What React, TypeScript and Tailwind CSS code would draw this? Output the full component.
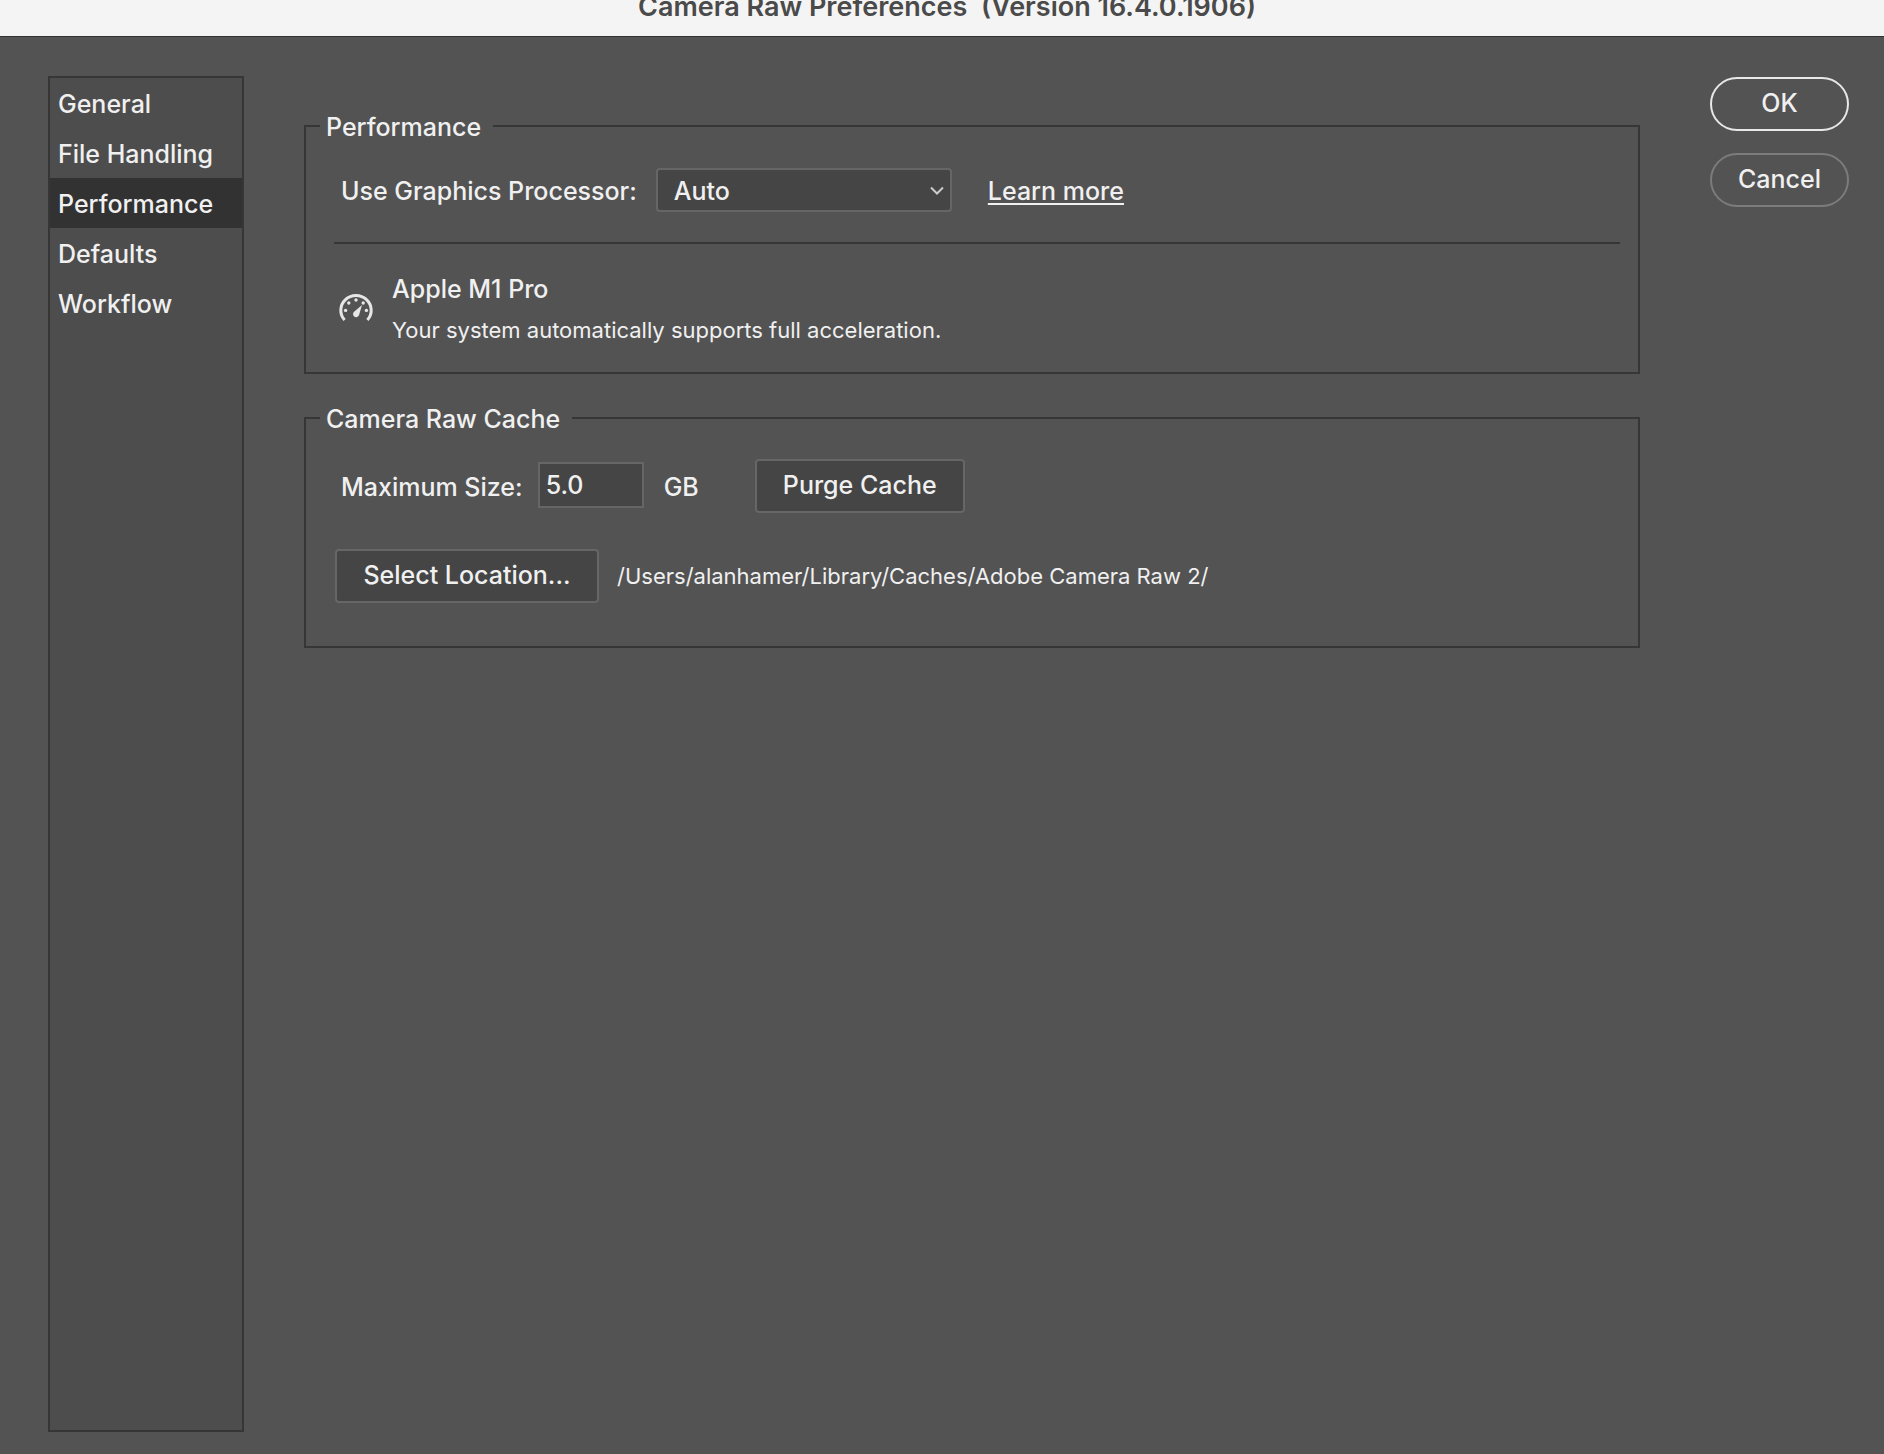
import { useState } from "react";

const sections = ["General", "File Handling", "Performance", "Defaults", "Workflow"];

function GaugeIcon() {
  return (
    <svg className="h-9 w-9 shrink-0" viewBox="0 0 36 36" fill="none" aria-hidden="true">
      <path d="M6.6 29A15.2 14.8 0 1 1 29.4 29" stroke="#e6e6e6" strokeWidth="3" />
      <g fill="#e6e6e6">
        <circle cx="7.6" cy="19.4" r="1.7" />
        <circle cx="10.8" cy="12" r="1.7" />
        <circle cx="18" cy="9" r="1.7" />
        <circle cx="25.2" cy="12" r="1.7" />
        <circle cx="28.4" cy="19.4" r="1.7" />
        <path d="M24 14L21 24.2A3.1 3.1 0 1 1 15.8 21Z" />
      </g>
    </svg>
  );
}

export default function App() {
  const [active, setActive] = useState("Performance");
  const [size, setSize] = useState("5.0");

  return (
    <div className="flex min-h-screen flex-col bg-[#535353] font-['Inter',sans-serif] text-[25px] leading-8 font-medium text-[#f0f0f0]">
      <header className="h-[37px] border-b border-[#323232] bg-[#f4f4f4] pl-[10px]">
        <h1 className="text-center text-[27px] leading-[14px] font-semibold whitespace-pre text-[#4a4a4a]">
          {"Camera Raw Preferences  (Version 16.4.0.1906)"}
        </h1>
      </header>

      <div className="flex flex-1 pt-[39px] pr-[35px] pb-[22px] pl-12">
        <nav className="w-[196px] shrink-0 border-2 border-[#363636] bg-[#4d4d4d]" aria-label="Preference sections">
          {sections.map((name) => (
            <button
              key={name}
              type="button"
              onClick={() => setActive(name)}
              aria-current={active === name ? "page" : undefined}
              className={
                active === name
                  ? "block h-[50px] w-full bg-[#323232] pt-0.5 pl-2 text-left whitespace-nowrap"
                  : "block h-[50px] w-full pt-0.5 pl-2 text-left whitespace-nowrap"
              }
            >
              {name}
            </button>
          ))}
        </nav>

        <main className="ml-[60px] min-w-0 flex-1 pt-[33px]">
          <fieldset className="min-w-0 border-2 border-[#363636] pr-[18px] pb-7 pl-[14px]">
            <legend className="pt-0.5 pr-3 pl-1.5">Performance</legend>
            <div className="pt-[25px] pl-[14px]">
              <div className="flex items-center pl-[7px]">
                <label htmlFor="gpu" className="pt-0.5">Use Graphics Processor:</label>
                <div className="relative ml-[19px] w-[296px]">
                  <select
                    id="gpu"
                    className="block h-11 w-full appearance-none rounded-sm border-2 border-[#666666] bg-[#454545] px-4 pt-0.5"
                  >
                    <option>Auto</option>
                  </select>
                  <svg
                    className="pointer-events-none absolute top-[18px] right-2 h-[10px] w-[14px]"
                    viewBox="0 0 14 10"
                    fill="none"
                    aria-hidden="true"
                  >
                    <path d="M1 1.5L7 7.5L13 1.5" stroke="#cccccc" strokeWidth="2" />
                  </svg>
                </div>
                <a href="#learn" className="ml-9 pt-0.5 underline decoration-2 underline-offset-[3px]">
                  Learn more
                </a>
              </div>
              <hr className="mt-[30px] border-t-2 border-[#363636]" />
              <div className="mt-[29px] flex items-center pl-1">
                <GaugeIcon />
                <div className="ml-[18px]">
                  <p>Apple M1 Pro</p>
                  <p className="mt-[11px] text-[22px] leading-7 font-normal">
                    Your system automatically supports full acceleration.
                  </p>
                </div>
              </div>
            </div>
          </fieldset>

          <fieldset className="mt-[27px] min-w-0 border-2 border-[#363636] pr-[18px] pb-[43px] pl-[14px]">
            <legend className="pt-0.5 pr-3 pl-1.5">Camera Raw Cache</legend>
            <div className="flex flex-col gap-9 pt-6 pl-[15px]">
              <div className="flex items-center pl-1.5">
                <label htmlFor="size" className="pt-0.5">Maximum Size:</label>
                <input
                  id="size"
                  type="text"
                  value={size}
                  onChange={(e) => setSize(e.target.value)}
                  className="mb-0.5 ml-[15px] h-[46px] w-[106px] border-2 border-[#666666] bg-[#454545] px-1.5"
                />
                <span className="ml-5 pt-0.5">GB</span>
                <button
                  type="button"
                  className="ml-14 h-[54px] w-[210px] rounded border-2 border-[#666666] bg-[#454545] pb-0.5"
                >
                  Purge Cache
                </button>
              </div>
              <div className="flex items-center">
                <button
                  type="button"
                  className="h-[54px] w-[264px] rounded border-2 border-[#666666] bg-[#454545] pb-0.5"
                >
                  Select Location...
                </button>
                <span className="ml-[18px] text-[22px] leading-7 font-normal">
                  /Users/alanhamer/Library/Caches/Adobe Camera Raw 2/
                </span>
              </div>
            </div>
          </fieldset>
        </main>

        <div className="ml-[70px] flex w-[139px] shrink-0 flex-col gap-[22px] pt-px">
          <button type="button" className="h-[54px] rounded-full border-2 border-[#e8e8e8] pb-0.5">
            OK
          </button>
          <button type="button" className="h-[54px] rounded-full border-2 border-[#7c7c7c] pb-0.5">
            Cancel
          </button>
        </div>
      </div>
    </div>
  );
}
